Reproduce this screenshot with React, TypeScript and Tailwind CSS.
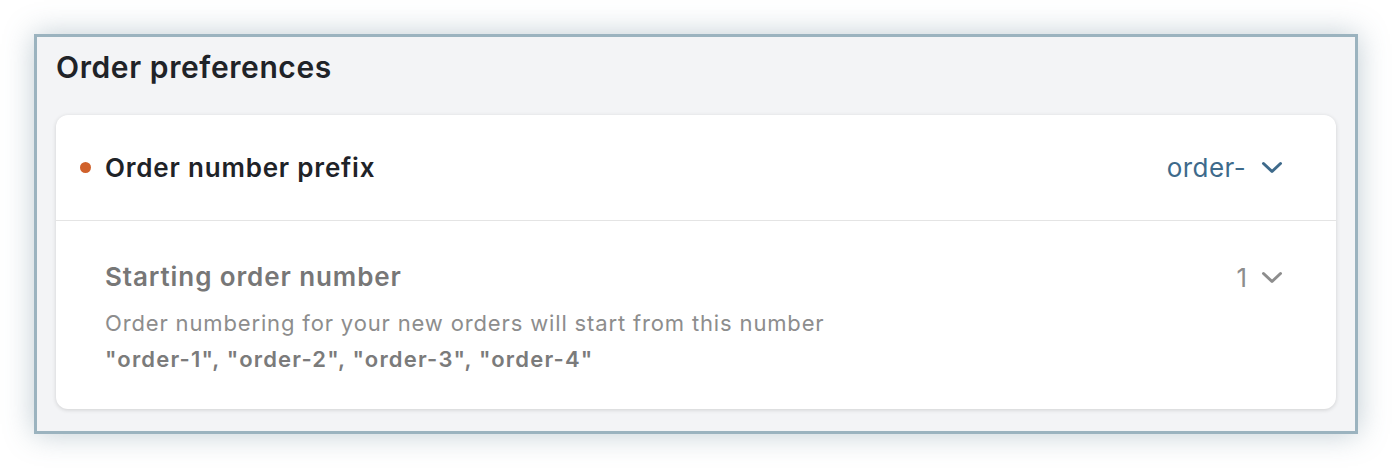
import React from 'react';

function Chevron({ className }: { className: string }) {
  return (
    <svg width="22" height="13" viewBox="0 0 22 13" fill="none" className={className}>
      <path d="M2.5 2.5l8.5 8 8.5-8" stroke="currentColor" strokeWidth="3" strokeLinecap="round" strokeLinejoin="round" />
    </svg>
  );
}

export default function App() {
  return (
    <div className="min-h-[468px] w-[1392px] bg-white pt-[34px] pl-[34px]" style={{ fontFamily: 'Inter, "Noto Sans", sans-serif' }}>
      <div className="w-[1324px] h-[400px] border-[3px] border-[#9bb3bf] bg-[#f3f4f6] px-[19px] shadow-[0_0_28px_rgba(90,120,140,0.38)]">
        <h1 className="pt-[8px] h-[78px] text-[30px] leading-[45px] font-semibold text-[#1f2328] tracking-[0.6px]">
          Order preferences
        </h1>

        <div className="rounded-xl bg-white shadow-[0_1px_4px_rgba(0,0,0,0.15)]">
          {/* prefix row */}
          <div className="flex h-[106px] items-center border-b border-[#e4e4e4] pl-[24px] pr-[53px]">
            <span className="h-[11px] w-[11px] rounded-full bg-[#d0612b]" />
            <span className="ml-[14px] text-[26px] font-semibold text-[#1f2328] tracking-[0.8px]">
              Order number prefix
            </span>
            <div className="ml-auto flex items-center gap-[15px] text-[26px] tracking-[0.4px] text-[#3e6a8b]">
              <span>order-</span>
              <Chevron className="text-[#3e6a8b]" />
            </div>
          </div>

          {/* starting number row */}
          <div className="flex h-[188px] pl-[49px] pr-[53px] pt-[43px]">
            <div className="flex flex-col">
              <span className="text-[26px] font-semibold leading-[26px] text-[#777777] tracking-[0.9px]">
                Starting order number
              </span>
              <span className="mt-[15px] text-[22px] leading-[36px] text-[#8d8d8d] tracking-[0.85px]">
                Order numbering for your new orders will start from this number
              </span>
              <span className="text-[22px] font-semibold leading-[36px] text-[#7b7b7b] tracking-[1.2px]">
                "order-1", "order-2", "order-3", "order-4"
              </span>
            </div>
            <div className="ml-auto flex h-[26px] items-center gap-[14px] text-[26px] text-[#8d8d8d]">
              <span>1</span>
              <Chevron className="text-[#8d8d8d]" />
            </div>
          </div>
        </div>
      </div>
    </div>
  );
}
